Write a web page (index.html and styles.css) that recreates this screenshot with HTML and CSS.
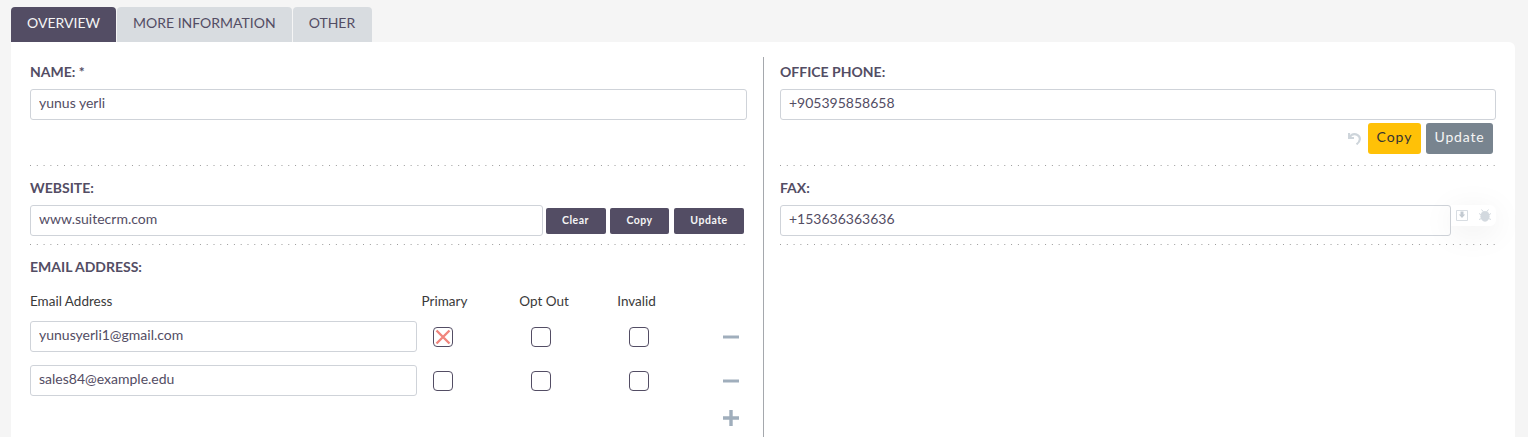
FILE: index.html
```html
<!DOCTYPE html>
<html lang="en">
<head>
  <meta charset="UTF-8">
  <title>Account - Overview</title>
  <link rel="stylesheet" href="styles.css">
</head>
<body>
  <div class="tabs">
    <a class="tab active">OVERVIEW</a>
    <a class="tab">MORE INFORMATION</a>
    <a class="tab">OTHER</a>
  </div>

  <div class="panel">
    <div class="col col-left">
      <div class="field field-name">
        <label>NAME: *</label>
        <input class="text" type="text" value="yunus yerli">
      </div>

      <div class="field field-website">
        <label>WEBSITE:</label>
        <div class="input-row">
          <input class="text" type="text" value="www.suitecrm.com">
          <button class="btn-dark btn-clear">Clear</button>
          <button class="btn-dark btn-copy">Copy</button>
          <button class="btn-dark btn-update">Update</button>
        </div>
      </div>

      <div class="field-email">
        <label>EMAIL ADDRESS:</label>
        <div class="email-grid">
          <span class="head">Email Address</span>
          <span class="head head-primary">Primary</span>
          <span class="head head-optout">Opt Out</span>
          <span class="head head-invalid">Invalid</span>
          <span></span>

          <input class="text" type="text" value="yunusyerli1@gmail.com">
          <span class="check checked">
            <svg width="16" height="16" viewBox="0 0 16 16"><path d="M1.500 1.500 14.500 14.500M14.500 1.500 1.500 14.500" stroke="#f0857d" stroke-width="2.400" fill="none"/></svg>
          </span>
          <span class="check"></span>
          <span class="check"></span>
          <span class="sign"><svg width="16" height="16" viewBox="0 0 16 16"><path d="M0 8H16" stroke="#a0aebc" stroke-width="3"/></svg></span>

          <input class="text" type="text" value="sales84@example.edu">
          <span class="check"></span>
          <span class="check"></span>
          <span class="check"></span>
          <span class="sign"><svg width="16" height="16" viewBox="0 0 16 16"><path d="M0 8H16" stroke="#a0aebc" stroke-width="3"/></svg></span>
        </div>
        <div class="add-row">
          <svg width="16" height="16" viewBox="0 0 16 16"><path d="M0 8H16M8 0V16" stroke="#a0aebc" stroke-width="3.400"/></svg>
        </div>
      </div>
    </div>

    <div class="col col-right">
      <div class="field field-phone">
        <label>OFFICE PHONE:</label>
        <input class="text" type="text" value="+905395858658">
        <div class="actions">
          <svg class="undo" width="13" height="13" viewBox="0 0 13 13"><path d="M1 1V6H6" stroke="#ced5db" stroke-width="2.200" fill="none"/><path d="M1.800 5C3.500 2.500 6 1.800 8 2.400C10.500 3.200 12 5 11.800 7.500C11.600 9.600 10.300 11 8.500 12.300" stroke="#ced5db" stroke-width="2.200" fill="none"/></svg>
          <button class="btn-copy-y">Copy</button>
          <button class="btn-update-g">Update</button>
        </div>
      </div>

      <div class="field field-fax">
        <label>FAX:</label>
        <input class="text fax-input" type="text" value="+153636363636">
        <div class="float-tools">
          <svg width="12" height="11" viewBox="0 0 12 11"><path d="M.5.500H11.500V10.500H.5Z" fill="none" stroke="#d8dde2"/><path d="M6 8 2.800 4.500H4.500V1.500H7.500V4.500H9.200Z" fill="#c3cad1"/></svg>
          <svg width="12" height="13" viewBox="0 0 12 13"><ellipse cx="6" cy="7.300" rx="4.600" ry="5.400" fill="#d3d9df"/><path d="M2.500.5 4.500 3M9.500.5 7.500 3M0 4.500 2.500 6M12 4.500 9.500 6M0 10.500 2.500 9.500M12 10.500 9.500 9.500" stroke="#d3d9df"/></svg>
        </div>
      </div>
    </div>
  </div>
</body>
</html>
```

FILE: styles.css
```css
body {
  margin: 0;
  height: 437px;
  overflow: hidden;
  background: #f5f5f5;
  font-family: Lato, sans-serif;
  font-size: 14px;
  color: #534d64;
}

.tabs {
  display: flex;
  gap: 1px;
  padding: 7px 0 0 11px;
}
.tab {
  height: 35px;
  line-height: 32px;
  padding: 0 16px;
  background: #d8dce0;
  color: #534d64;
  font-size: 14px;
  border-radius: 4px 4px 0 0;
}
.tab:last-child {
  padding-right: 17px;
}
.tab.active {
  background: #534d64;
  color: #f5f5f5;
}

.panel {
  display: flex;
  margin: 0 13px 0 11px;
  height: 395px;
  box-sizing: border-box;
  padding-top: 15px;
  background: #fff;
  border-radius: 0 6px 0 0;
}
.col {
  box-sizing: border-box;
}
.col-left {
  width: 753px;
  padding-left: 19px;
  padding-right: 16px;
  border-right: 1px solid #a5a8ad;
}
.col-right {
  width: 733px;
  padding-left: 16px;
}

label {
  display: block;
  font-size: 14px;
  font-weight: 700;
  line-height: 17px;
  padding-top: 6px;
  margin-bottom: 9px;
}
.field-website label,
.field-fax label,
.field-email label {
  padding-top: 13px;
}

.text {
  display: block;
  box-sizing: border-box;
  width: 100%;
  height: 31px;
  margin: 0;
  padding: 0 8px 4px;
  border: 1px solid #cfd3d9;
  border-radius: 3px;
  background: #fff;
  font-family: Lato, sans-serif;
  font-size: 14px;
  color: #534d64;
  outline: none;
}

.field {
  box-sizing: border-box;
  background-image: linear-gradient(to right, #999 1px, transparent 1px);
  background-size: 6.800px 1px;
  background-repeat: repeat-x;
  background-position: left bottom;
}
.field-name, .field-phone {
  height: 109px;
}
.field-website, .field-fax {
  height: 79px;
}

.input-row {
  display: flex;
  align-items: center;
  gap: 4px;
}
.input-row .text {
  width: 513px;
  flex: none;
}
.btn-dark {
  height: 26px;
  padding: 0 0 2px;
  border: 0;
  border-radius: 2px;
  background: #534d64;
  color: #f5f5f5;
  font-family: Lato, sans-serif;
  font-size: 10.500px;
  font-weight: 700;
  letter-spacing: 0.5px;
}
.btn-clear { width: 60px; margin-left: -1px; padding-right: 1px; }
.btn-copy { width: 59px; }
.btn-update { width: 70px; margin-left: 1px; }

.email-grid {
  display: grid;
  grid-template-columns: 387px 52px 144px 52px 1fr;
  grid-template-rows: 16px 31px 31px;
  row-gap: 13px;
  align-items: center;
  margin-top: 17px;
}
.email-grid > .head {
  font-size: 13.500px;
  color: #3a3a3a;
  margin-top: 2px;
  text-align: center;
}
.email-grid > .head:first-child {
  text-align: left;
}
.head-primary { padding-left: 3px; }
.head-optout { padding-left: 6px; }
.head-invalid { padding-right: 5px; }

.check {
  box-sizing: border-box;
  width: 20px;
  height: 20px;
  justify-self: center;
  display: flex;
  align-items: center;
  justify-content: center;
  border: 1px solid #534d64;
  border-radius: 4px;
  background: #fff;
  margin-top: 1px;
}

.sign {
  display: flex;
  justify-content: flex-end;
  padding-right: 8px;
}
.add-row {
  display: flex;
  justify-content: flex-end;
  padding-right: 8px;
  margin-top: 14px;
}

.field-phone, .field-fax {
  width: 716px;
}
.actions {
  display: flex;
  align-items: center;
  justify-content: flex-end;
  gap: 5px;
  margin-top: 3px;
  padding-right: 3px;
}
.undo {
  margin-right: 2px;
}
.btn-copy-y, .btn-update-g {
  height: 31px;
  padding: 0 0 4px;
  border: 0;
  border-radius: 3px;
  font-family: Lato, sans-serif;
  font-size: 14px;
}
.btn-copy-y {
  width: 53px;
  background: #ffc107;
  color: #333;
  letter-spacing: 1px;
}
.btn-update-g {
  width: 67px;
  background: #78848f;
  color: #f5f5f5;
  letter-spacing: 0.8px;
}

.field-fax {
  position: relative;
}
.fax-input {
  width: 671px;
}
.float-tools {
  position: absolute;
  left: 671px;
  top: 39px;
  box-sizing: border-box;
  width: 45px;
  height: 21px;
  display: flex;
  align-items: center;
  gap: 11px;
  padding-left: 5px;
  background: #fff;
  border-radius: 0 6px 6px 0;
  box-shadow: 0 6px 32px rgba(0, 0, 0, 0.08);
}
```
